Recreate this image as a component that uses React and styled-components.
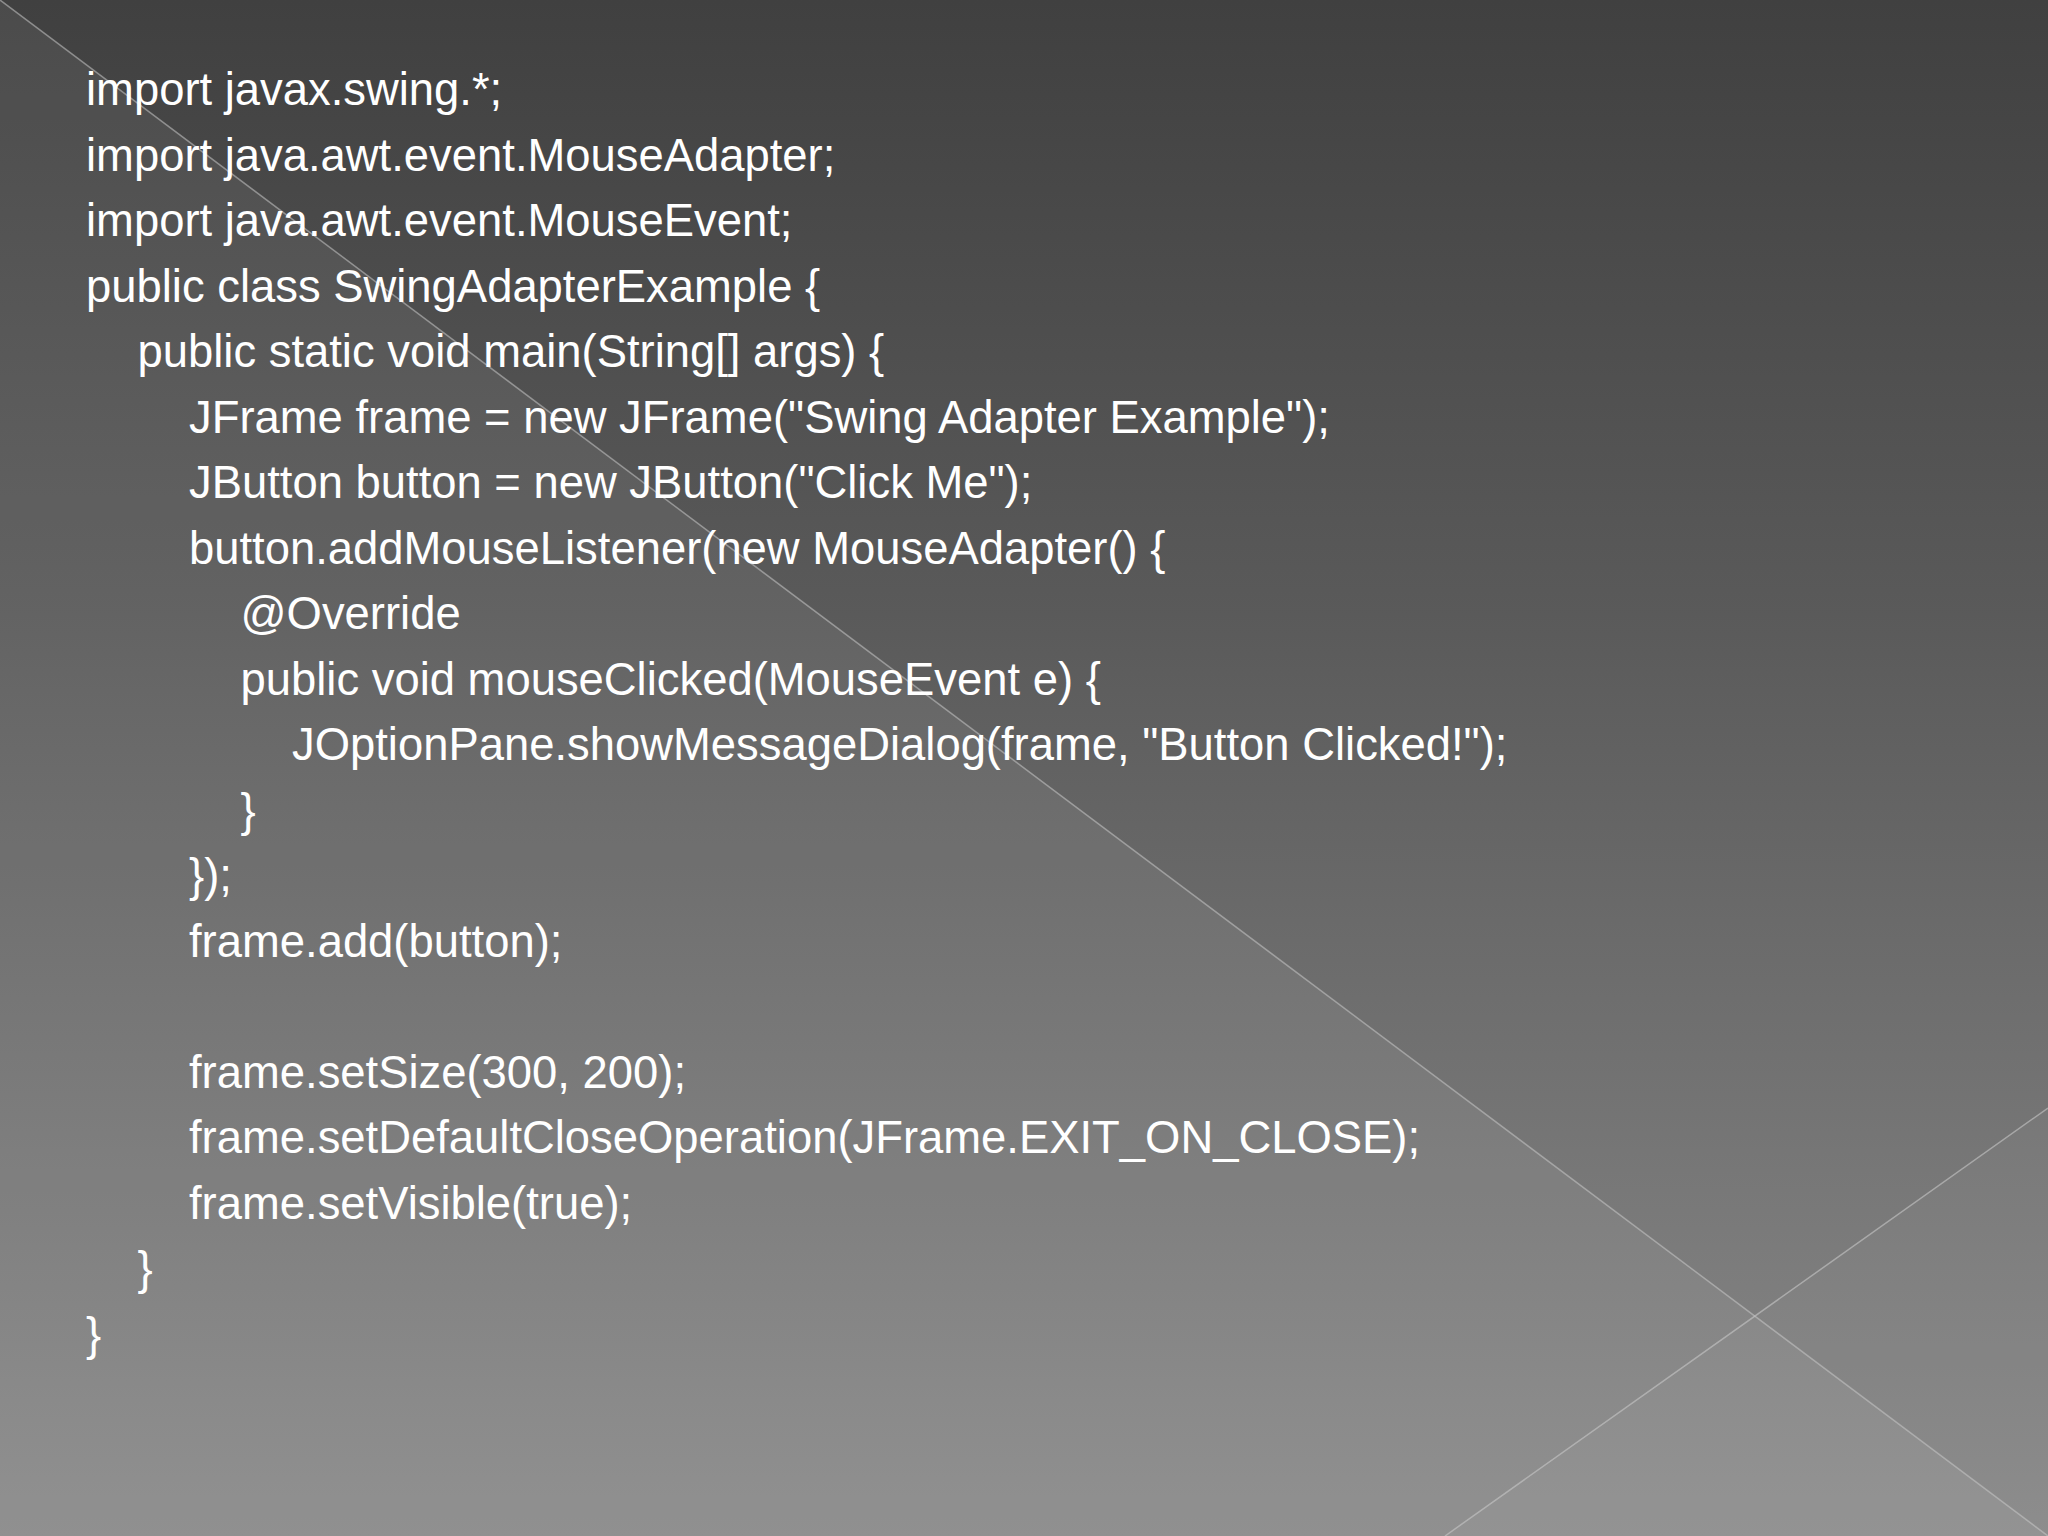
import React from "react";
import styled, { createGlobalStyle } from "styled-components";

const GlobalStyle = createGlobalStyle`
  html, body {
    margin: 0;
    padding: 0;
    background: #444;
  }
`;

const LINES = [
  [0, "import javax.swing.*;"],
  [0, "import java.awt.event.MouseAdapter;"],
  [0, "import java.awt.event.MouseEvent;"],
  [0, "public class SwingAdapterExample {"],
  [1, "public static void main(String[] args) {"],
  [2, 'JFrame frame = new JFrame("Swing Adapter Example");'],
  [2, 'JButton button = new JButton("Click Me");'],
  [2, "button.addMouseListener(new MouseAdapter() {"],
  [3, "@Override"],
  [3, "public void mouseClicked(MouseEvent e) {"],
  [4, 'JOptionPane.showMessageDialog(frame, "Button Clicked!");'],
  [3, "}"],
  [2, "});"],
  [2, "frame.add(button);"],
  [2, ""],
  [2, "frame.setSize(300, 200);"],
  [2, "frame.setDefaultCloseOperation(JFrame.EXIT_ON_CLOSE);"],
  [2, "frame.setVisible(true);"],
  [1, "}"],
  [0, "}"],
];

const App = () => {
  return (
    <>
      <GlobalStyle />
      <Slide>
        <Backdrop viewBox="0 0 2048 1536" preserveAspectRatio="none">
          <polygon points="0,0 2048,1536 0,1536" fill="#fff" fillOpacity="0.06" />
          <polygon points="2048,1108 1445,1536 2048,1536" fill="#fff" fillOpacity="0.03" />
          <line x1="0" y1="0" x2="2048" y2="1536" stroke="#c8c8c8" strokeOpacity="0.55" strokeWidth="1.5" />
          <line x1="2048" y1="1108" x2="1445" y2="1536" stroke="#c8c8c8" strokeOpacity="0.6" strokeWidth="1.5" />
        </Backdrop>
        <Code>
          {LINES.map(([level, text], i) => (
            <Line key={i} $level={level}>
              {text || "\u00a0"}
            </Line>
          ))}
        </Code>
      </Slide>
    </>
  );
};

const Slide = styled.div`
  position: relative;
  width: 2048px;
  height: 1536px;
  overflow: hidden;
  background: linear-gradient(to bottom, #404040 0%, #5a5a5a 40%, #8a8a8a 100%);
`;

const Backdrop = styled.svg`
  position: absolute;
  inset: 0;
  width: 100%;
  height: 100%;
`;

const Code = styled.div`
  position: relative;
  padding: 57px 0 0 86px;
  font-family: "Liberation Sans", Arial, sans-serif;
  font-size: 45.4px;
  line-height: 65.5px;
  color: #fff;
`;

const Line = styled.div`
  margin-left: ${(p) => p.$level * 51.5}px;
  white-space: pre;
`;

export default App;
